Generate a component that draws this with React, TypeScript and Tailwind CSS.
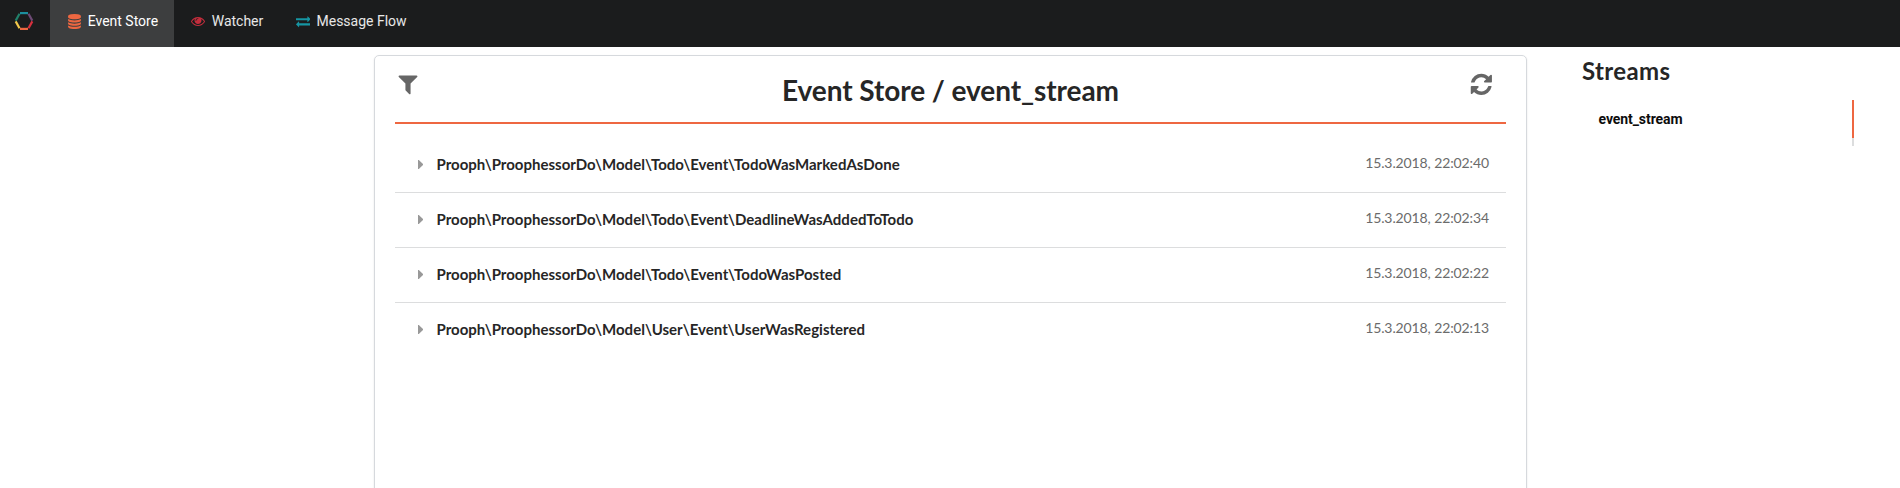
import type { ReactNode } from "react";

const paths = {
  database:
    "M896 768q237 0 443-43t325-127v170q0 69-103 128t-280 93.5-385 34.5-385-34.5-280-93.5-103-128v-170q119 84 325 127t443 43zm0 768q237 0 443-43t325-127v170q0 69-103 128t-280 93.5-385 34.5-385-34.5-280-93.5-103-128v-170q119 84 325 127t443 43zm0-384q237 0 443-43t325-127v170q0 69-103 128t-280 93.5-385 34.5-385-34.5-280-93.5-103-128v-170q119 84 325 127t443 43zm0-1152q208 0 385 34.5t280 93.5 103 128v128q0 69-103 128t-280 93.5-385 34.5-385-34.5-280-93.5-103-128v-128q0-69 103-128t280-93.5 385-34.5z",
  eye: "M1664 960q-152-236-381-353 61 104 61 225 0 185-131.5 316.5t-316.5 131.5-316.5-131.5-131.5-316.5q0-121 61-225-229 117-381 353 133 205 333.5 326.5t434.5 121.5 434.5-121.5 333.5-326.5zm-720-384q0-20-14-34t-34-14q-125 0-214.5 89.5t-89.5 214.5q0 20 14 34t34 14 34-14 14-34q0-86 61-147t147-61q20 0 34-14t14-34zm848 384q0 34-20 69-140 230-376.5 368.5t-499.5 138.5-499.5-139-376.5-368q-20-35-20-69t20-69q140-229 376.5-368t499.5-139 499.5 139 376.5 368q20 35 20 69z",
  exchange:
    "M1792 1184v192q0 13-9.5 22.5t-22.5 9.5h-1376v192q0 13-9.5 22.5t-22.5 9.5q-12 0-24-10l-319-320q-9-9-9-22 0-14 9-23l320-320q9-9 23-9 13 0 22.5 9.5t9.5 22.5v192h1376q13 0 22.5 9.5t9.5 22.5zm0-544q0 14-9 23l-320 320q-9 9-23 9-13 0-22.5-9.5t-9.5-22.5v-192h-1376q-13 0-22.5-9.5t-9.5-22.5v-192q0-13 9.5-22.5t22.5-9.5h1376v-192q0-14 9-23t23-9q12 0 24 10l319 319q9 9 9 23z",
  filter:
    "M1595 295q17 41-14 70l-493 493v742q0 42-39 59-13 5-25 5-27 0-45-19l-256-256q-19-19-19-45v-486l-493-493q-31-29-14-70 17-39 59-39h1280q42 0 59 39z",
  refresh:
    "M1639 1056q0 5-1 7-64 268-268 434.5t-478 166.5q-146 0-282.5-55t-243.5-157l-129 129q-19 19-45 19t-45-19-19-45v-448q0-26 19-45t45-19h448q26 0 45 19t19 45-19 45l-137 137q71 66 161 102t187 36q134 0 250-65t186-179q11-17 53-117 8-23 30-23h192q13 0 22.5 9.5t9.5 22.5zm25-800v448q0 26-19 45t-45 19h-448q-26 0-45-19t-19-45 19-45l138-138q-148-137-349-137-134 0-250 65t-186 179q-11 17-53 117-8 23-30 23h-199q-13 0-22.5-9.5t-9.5-22.5v-7q65-268 270-434.5t480-166.5q146 0 284 55.5t245 156.5l130-129q19-19 45-19t45 19 19 45z",
};

function Icon({ name, className }: { name: keyof typeof paths; className: string }) {
  return (
    <svg viewBox="0 0 1792 1792" fill="currentColor" className={className} aria-hidden="true">
      <path d={paths[name]} />
    </svg>
  );
}

function Logo() {
  return (
    <svg viewBox="0 0 20 20" className="h-5 w-5" fill="none" strokeWidth="2.2" aria-hidden="true">
      <path d="M6 2.1H14" stroke="#1c8f9e" />
      <path d="M14.5 2.8L18.3 9.6" stroke="#6d4a75" />
      <path d="M18.3 10.4L14.5 17.2" stroke="#d5303e" />
      <path d="M14 17.9H6" stroke="#ee6741" />
      <path d="M5.5 17.2L1.7 10.4" stroke="#f3c84b" />
      <path d="M1.7 9.6L5.5 2.8" stroke="#21806a" />
    </svg>
  );
}

function NavItem({ active, icon, label }: { active?: boolean; icon: ReactNode; label: string }) {
  return (
    <a
      className={
        active
          ? "flex w-[124px] bg-[#3d3e3f] pt-[13px] pl-4 text-sm leading-4 whitespace-nowrap text-white"
          : "flex pt-[13px] pr-[15.5px] pl-4 text-sm leading-4 whitespace-nowrap text-white/90"
      }
    >
      <span className="mr-[5.2px] flex h-4 w-[16.5px] items-center justify-center">{icon}</span>
      {label}
    </a>
  );
}

const events = [
  { name: "Prooph\\ProophessorDo\\Model\\Todo\\Event\\TodoWasMarkedAsDone", time: "15.3.2018, 22:02:40" },
  { name: "Prooph\\ProophessorDo\\Model\\Todo\\Event\\DeadlineWasAddedToTodo", time: "15.3.2018, 22:02:34" },
  { name: "Prooph\\ProophessorDo\\Model\\Todo\\Event\\TodoWasPosted", time: "15.3.2018, 22:02:22" },
  { name: "Prooph\\ProophessorDo\\Model\\User\\Event\\UserWasRegistered", time: "15.3.2018, 22:02:13" },
];

export default function App() {
  return (
    <div className="flex h-[488px] flex-col overflow-hidden bg-white font-['Lato',sans-serif] text-[#262626]">
      <nav className="flex h-[47px] shrink-0 bg-[#1b1c1d] font-['Roboto',sans-serif]">
        <a className="flex w-[50px] items-start justify-center pt-[11px] pr-[2px]">
          <Logo />
        </a>
        <NavItem active icon={<Icon name="database" className="h-[15px] w-[15px] text-[#ee6741]" />} label="Event Store" />
        <NavItem icon={<Icon name="eye" className="h-[14px] w-[14px] text-[#c32d3c]" />} label="Watcher" />
        <NavItem icon={<Icon name="exchange" className="h-[14.5px] w-[14.5px] text-[#1695a3]" />} label="Message Flow" />
      </nav>
      <div className="flex min-h-0 flex-1">
        <main className="mt-2 ml-[374px] h-[520px] w-[1153px] rounded-[5px] border border-[#d6d9dd] px-5 shadow-[0_1px_2px_rgba(34,36,38,0.12)]">
          <header className="grid h-[68px] grid-cols-[40px_1fr_40px] border-b-2 border-[#ee6741]">
            <Icon name="filter" className="mt-4 ml-px h-6 w-6 text-[#666666]" />
            <h1 className="mt-4 text-center text-[28px] leading-9 font-bold tracking-[-0.07px]">Event Store / event_stream</h1>
            <Icon name="refresh" className="mt-4 ml-[3.3px] h-[24.7px] w-[24.7px] text-[#666666]" />
          </header>
          <ul className="pt-[14px]">
            {events.map((event) => (
              <li key={event.time} className="flex h-[55px] border-b border-[#dcddde] pr-[17px] pl-[23px] last:border-b-0">
                <svg viewBox="0 0 5 9" className="mt-[22px] mr-[13.5px] h-[9px] w-[5px] shrink-0" fill="#999999" aria-hidden="true">
                  <path d="M0 0H0.8L5 4V5L0.8 9H0Z" />
                </svg>
                <span className="mt-4 flex-1 text-[15px] leading-5 font-bold tracking-[0.01px]">{event.name}</span>
                <time className="mt-[15px] text-sm leading-5 tracking-[-0.11px] text-[#6b6b6b]">{event.time}</time>
              </li>
            ))}
          </ul>
        </main>
        <aside className="ml-[55px] w-[272px]">
          <h2 className="mt-2 text-2xl leading-8 font-bold tracking-[0.38px]">Streams</h2>
          <div className="mt-[13px] flex h-[46px] flex-col border-r-2 border-[#dcddde]">
            <a className="mr-[-2px] flex h-[38px] items-center border-r-2 border-[#ee6741] pl-[16.5px] font-['Roboto',sans-serif] text-sm font-bold tracking-[-0.08px] text-[#0d0d0d]">
              event_stream
            </a>
          </div>
        </aside>
      </div>
    </div>
  );
}
